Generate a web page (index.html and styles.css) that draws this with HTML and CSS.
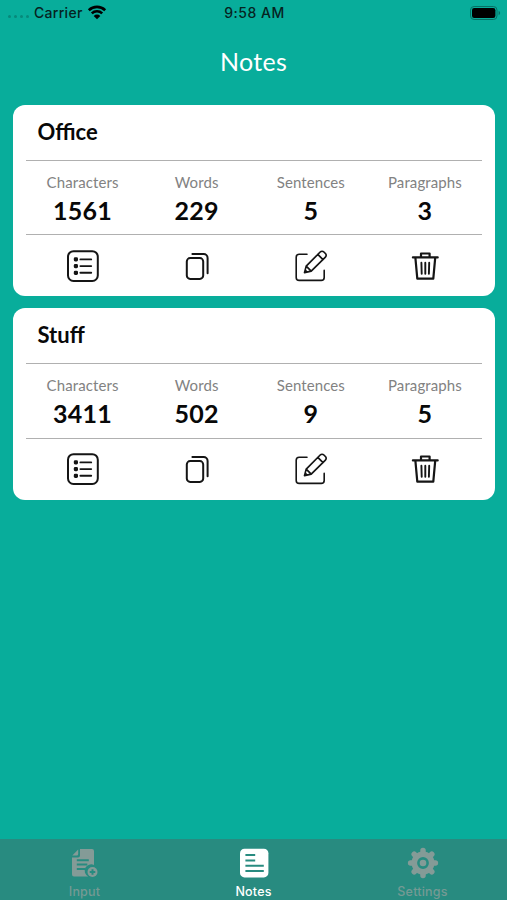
FILE: index.html
```html
<!DOCTYPE html>
<html lang="en">
<head>
  <meta charset="UTF-8" />
  <meta name="viewport" content="width=device-width, initial-scale=1.0" />
  <title>Notes</title>
  <link rel="stylesheet" href="styles.css">
</head>
<body>
  <!-- Shared icons -->
  <svg class="sprite" aria-hidden="true">
    <symbol id="icon-list" viewBox="0 0 36 36">
      <rect x="3" y="3.2" width="29.8" height="29.8" rx="5.5" stroke-width="2" />
      <path d="M15.4 11.4h10.8M15.4 18.1h10.8M15.4 24.8h10.8" stroke-width="1.9" />
      <g class="solid">
        <rect x="8.8" y="9.3" width="4.2" height="4.2" rx="1.4" />
        <rect x="8.8" y="16" width="4.2" height="4.2" rx="1.4" />
        <rect x="8.8" y="22.7" width="4.2" height="4.2" rx="1.4" />
      </g>
    </symbol>
    <symbol id="icon-copy" viewBox="0 0 36 36">
      <rect x="7.8" y="10.1" width="16.4" height="20.8" rx="3.4" stroke-width="2" />
      <path d="M13.4 6.1h11.2a4 4 0 0 1 4 4v15.2" stroke-width="2" />
    </symbol>
    <symbol id="icon-edit" viewBox="0 0 36 36">
      <path d="M14 6.2H6.2a3 3 0 0 0-3 3v20.2a3 3 0 0 0 3 3h22a3 3 0 0 0 3-3v-7" stroke-width="1.6" />
      <path d="M11.5 24.6l1.7-6.5L27.2 4a2.6 2.6 0 0 1 3.7 0l1.5 1.5a2.6 2.6 0 0 1 0 3.7L18.2 23.1zM13.2 18.1l5 5M24.8 6.4l5.2 5.2M12.2 22.2l1.8 1.8" stroke-width="1.7" />
    </symbol>
    <symbol id="icon-trash" viewBox="0 0 36 36">
      <path d="M5.9 9.4h24.8M14 9V5.5h8.6V9M8.4 9.8l1.9 20.9h16l1.9-20.9" stroke-width="2.2" />
      <path d="M14.4 14.8l.3 11M18.3 14.8v11M22.2 14.8l-.3 11" stroke-width="1.9" />
    </symbol>
  </svg>

  <div class="app">
    <div class="status-bar">
      <div class="carrier">
        <span class="signal"><i></i><i></i><i></i><i></i></span>
        <span>Carrier</span>
        <svg class="wifi" viewBox="0 0 20 15">
          <path d="M1.8 5.2a11.8 11.8 0 0 1 16.4 0M4.8 8.4a7.5 7.5 0 0 1 10.4 0" />
          <path class="solid" d="M10 14.2L6.7 10.9a4.7 4.7 0 0 1 6.6 0z" />
        </svg>
      </div>
      <div class="clock">9:58 AM</div>
      <div class="battery">
        <svg viewBox="0 0 32 14">
          <rect class="outline" x=".5" y=".5" width="26.5" height="13" rx="3.6" />
          <rect x="2" y="2" width="23.4" height="10" rx="2.2" />
          <path class="nub" d="M28.6 4.8c2 .8 2 3.6 0 4.4z" />
        </svg>
      </div>
    </div>

    <header>
      <h1>Notes</h1>
    </header>

    <main class="notes">
      <section class="card">
        <h2>Office</h2>
        <div class="stats">
          <div class="stat"><span class="label">Characters</span><span class="value">1561</span></div>
          <div class="stat"><span class="label">Words</span><span class="value">229</span></div>
          <div class="stat"><span class="label">Sentences</span><span class="value">5</span></div>
          <div class="stat"><span class="label">Paragraphs</span><span class="value">3</span></div>
        </div>
        <div class="actions">
          <button type="button" aria-label="Details"><svg><use href="#icon-list" /></svg></button>
          <button type="button" aria-label="Copy"><svg><use href="#icon-copy" /></svg></button>
          <button type="button" aria-label="Edit"><svg><use href="#icon-edit" /></svg></button>
          <button type="button" aria-label="Delete"><svg><use href="#icon-trash" /></svg></button>
        </div>
      </section>

      <section class="card">
        <h2>Stuff</h2>
        <div class="stats">
          <div class="stat"><span class="label">Characters</span><span class="value">3411</span></div>
          <div class="stat"><span class="label">Words</span><span class="value">502</span></div>
          <div class="stat"><span class="label">Sentences</span><span class="value">9</span></div>
          <div class="stat"><span class="label">Paragraphs</span><span class="value">5</span></div>
        </div>
        <div class="actions">
          <button type="button" aria-label="Details"><svg><use href="#icon-list" /></svg></button>
          <button type="button" aria-label="Copy"><svg><use href="#icon-copy" /></svg></button>
          <button type="button" aria-label="Edit"><svg><use href="#icon-edit" /></svg></button>
          <button type="button" aria-label="Delete"><svg><use href="#icon-trash" /></svg></button>
        </div>
      </section>
    </main>

    <nav class="tab-bar">
      <a class="tab">
        <svg viewBox="0 0 32 32">
          <path d="M11 2h12a2 2 0 0 1 2 2v14a6.4 6.4 0 0 0-5.8 11.5H5a2 2 0 0 1-2-2V10.500h6a2 2 0 0 0 2-2z" />
          <path d="M9.2 2.500v4.600a1.500 1.500 0 0 1-1.500 1.500H3.300z" />
          <path class="cut" d="M7.800 13.200h12M7.800 17.600h10.500M7.800 22h8.500" />
          <circle cx="23.500" cy="25" r="5" />
          <path class="cut" d="M23.500 22.200v5.600M20.700 25h5.600" />
        </svg>
        <span>Input</span>
      </a>
      <a class="tab active">
        <svg viewBox="0 0 32 32">
          <rect x="2" y="1.800" width="28.400" height="28.600" rx="4.500" />
          <path class="cut" d="M7.400 8.100h9.800M7.400 13.400h9.800M7.400 18.700h18.400M7.400 24h18.400" />
        </svg>
        <span>Notes</span>
      </a>
      <a class="tab">
        <svg viewBox="0 0 32 32">
          <circle cx="16" cy="16" r="11.500" />
          <path class="teeth" d="M16 3.600v24.800M3.600 16h24.800M7.200 7.200l17.600 17.600M24.800 7.200L7.200 24.800" />
          <circle class="hole" cx="16" cy="16" r="4.600" />
        </svg>
        <span>Settings</span>
      </a>
    </nav>
  </div>
</body>
</html>
```

FILE: styles.css
```css
* {
  box-sizing: border-box;
}
body {
  font-family: Lato, "Open Sans", sans-serif;
  margin: 0;
  background: #08ad9b;
}
.sprite {
  display: none;
}
.app {
  display: flex;
  flex-direction: column;
  height: 100vh;
}

/* Status bar */
.status-bar {
  display: grid;
  grid-template-columns: 1fr 1fr 1fr;
  align-items: center;
  height: 26px;
  padding: 0 5px 1px 7px;
  font-family: Inter, Roboto, sans-serif;
  font-size: 14px;
  font-weight: 500;
  color: #06231f;
}
.carrier {
  display: flex;
  align-items: center;
  letter-spacing: 0.3px;
}
.signal {
  display: flex;
  gap: 3px;
  width: 27px;
  padding: 7px 0 0 1px;
}
.signal i {
  width: 3px;
  height: 3px;
  border-radius: 50%;
  background: #07897b;
}
.wifi {
  width: 20px;
  height: 15px;
  margin-left: 4px;
  fill: none;
  stroke: #000;
  stroke-width: 2.6;
}
.wifi .solid {
  fill: #000;
  stroke: none;
}
.clock {
  text-align: center;
  letter-spacing: 0.5px;
}
.battery {
  display: flex;
  justify-content: flex-end;
}
.battery svg {
  width: 32px;
  height: 14px;
}
.battery .outline {
  fill: none;
  stroke: #067064;
}
.battery .nub {
  fill: #067064;
}

header {
  height: 78.5px;
  padding-top: 20px;
  text-align: center;
}
h1 {
  margin: 0;
  font-size: 25px;
  font-weight: 400;
  line-height: 30px;
  letter-spacing: 0.3px;
  color: white;
}

/* Note cards */
.notes {
  flex: 1;
  display: flex;
  flex-direction: column;
  gap: 12px;
  padding: 0 12.5px 0 13px;
}
.card {
  height: 191.5px;
  padding: 0 12.5px;
  border-radius: 12px;
  background: white;
}
.card h2 {
  height: 55px;
  margin: 0;
  padding-left: 12px;
  font-size: 22px;
  font-weight: 700;
  line-height: 54px;
  color: #080808;
}
.stats,
.actions {
  display: grid;
  grid-template-columns: repeat(4, 1fr);
}
.stats {
  height: 75.5px;
  padding-top: 12px;
  border-top: 1px solid #b0b0b0;
  border-bottom: 1px solid #b0b0b0;
}
.stat {
  display: flex;
  flex-direction: column;
  align-items: center;
}
.label {
  font-size: 15px;
  line-height: 19px;
  letter-spacing: 0.1px;
  color: #828282;
}
.value {
  font-size: 25px;
  font-weight: 700;
  line-height: 37px;
  letter-spacing: 0.3px;
  color: #080808;
}
.actions {
  height: 61px;
}
.actions button {
  display: flex;
  align-items: center;
  justify-content: center;
  padding: 0;
  border: none;
  background: none;
  cursor: pointer;
}
.actions svg {
  width: 36px;
  height: 36px;
  fill: none;
  stroke: #151515;
  stroke-linecap: round;
  stroke-linejoin: round;
}
.solid {
  fill: #151515;
  stroke: none;
}

/* Bottom tabs */
.tab-bar {
  display: flex;
  height: 61px;
  background: #288b80;
}
.tab {
  flex: 1;
  display: flex;
  flex-direction: column;
  align-items: center;
  padding-top: 8px;
  font-family: Inter, Roboto, sans-serif;
  font-size: 12.5px;
  font-weight: 500;
  line-height: 17px;
  letter-spacing: 0.2px;
  color: #759a94;
}
.tab svg {
  width: 32px;
  height: 32px;
  margin-bottom: 4px;
  fill: #849b97;
}
.tab .cut {
  fill: none;
  stroke: #288b80;
  stroke-width: 2;
}
.tab .teeth {
  fill: none;
  stroke: #849b97;
  stroke-width: 5.5;
  stroke-linecap: round;
}
.tab .hole {
  fill: #849b97;
  stroke: #288b80;
  stroke-width: 2.6;
}
.tab.active {
  color: white;
}
.tab.active svg {
  fill: white;
}
```
